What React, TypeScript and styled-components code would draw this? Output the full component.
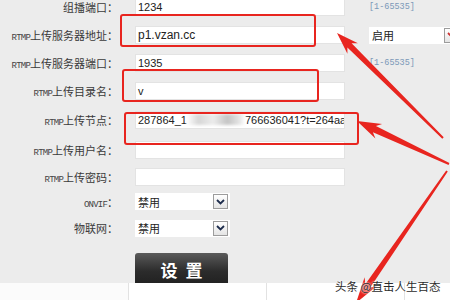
import React from "react";
import styled, { createGlobalStyle } from "styled-components";

const GlobalStyle = createGlobalStyle`
  html, body {
    margin: 0;
    padding: 0;
    width: 450px;
    height: 300px;
    overflow: hidden;
    background: #ececec;
  }
`;

const RED = "#e8251f";

type Pt = [number, number];

// builds a tapered arrow polygon from tip to tail
const arrowPoints = (tip: Pt, tail: Pt, headLen: number, headW: number, neckW: number, tailW: number) => {
  const dx = tail[0] - tip[0];
  const dy = tail[1] - tip[1];
  const len = Math.hypot(dx, dy);
  const ux = dx / len;
  const uy = dy / len;
  const nx = -uy;
  const ny = ux;
  const at = (d: number, w: number): string =>
    `${(tip[0] + ux * d + nx * w).toFixed(1)},${(tip[1] + uy * d + ny * w).toFixed(1)}`;
  return [
    at(0, 0),
    at(headLen, headW / 2),
    at(headLen * 0.8, neckW / 2),
    at(len, tailW / 2),
    at(len, -tailW / 2),
    at(headLen * 0.8, -neckW / 2),
    at(headLen, -headW / 2),
  ].join(" ");
};

const Page = styled.div`
  position: relative;
  width: 450px;
  height: 300px;
  overflow: hidden;
  display: flex;
  flex-direction: column;
  font-family: "Noto Sans CJK SC", "Liberation Sans", sans-serif;
`;

const Form = styled.div`
  margin-top: -7px;
  display: flex;
  flex-direction: column;
`;

const Row = styled.div<{ h: number }>`
  display: grid;
  grid-template-columns: 118px 210px 1fr;
  column-gap: 17px;
  align-items: center;
  height: ${(p) => p.h}px;
`;

const Label = styled.div`
  text-align: right;
  white-space: nowrap;
  font-size: 11px;
  color: #3a3a3a;
`;

const Latin = styled.span`
  font-family: "Liberation Mono", monospace;
  font-size: 9px;
  letter-spacing: -0.8px;
  color: #444;
`;

const Field = styled.div<{ big?: boolean }>`
  box-sizing: border-box;
  height: 18px;
  background: #fff;
  border: 1px solid #e3e3e3;
  padding-left: 2px;
  font-family: "Liberation Sans", Arial, sans-serif;
  font-size: ${(p) => (p.big ? 12 : 11)}px;
  line-height: 16px;
  color: #222;
  white-space: nowrap;
  overflow: hidden;
`;

const Blur = styled.span`
  display: inline-block;
  width: 58px;
  height: 11px;
  vertical-align: -1px;
  background: linear-gradient(90deg, #fff 0%, #d6d6d6 20%, #ececec 45%, #c4c4c4 70%, #e4e4e4 90%, #fff 100%);
  filter: blur(1.5px);
`;

const Hint = styled.div`
  margin-left: 7px;
  font-family: "Liberation Mono", monospace;
  font-size: 8.5px;
  color: #7b98b8;
`;

const Select = styled.div<{ w: number }>`
  box-sizing: border-box;
  width: ${(p) => p.w}px;
  height: 17px;
  background: #fff;
  display: flex;
  align-items: center;
  justify-content: space-between;
  padding: 0 2px 0 3px;
  font-size: 11px;
  color: #222;
`;

const SideSelect = styled(Select)`
  margin-left: 7px;
`;

const ArrowBox = styled.div`
  box-sizing: border-box;
  width: 15px;
  height: 15px;
  border: 1px solid #9c9c9c;
  background: linear-gradient(#ffffff, #e4e4e4);
  display: flex;
  align-items: center;
  justify-content: center;
`;

const ButtonRow = styled.div`
  padding: 11px 0 0 135px;
`;

const Button = styled.div`
  width: 93px;
  height: 30px;
  box-sizing: border-box;
  padding-top: 3px;
  border-radius: 3px 3px 0 0;
  background: linear-gradient(#5a5a5a, #2c2c2c 60%, #222);
  display: flex;
  align-items: center;
  justify-content: center;
  color: #fff;
  font-weight: bold;
  font-size: 17px;
  letter-spacing: 8px;
  text-indent: 8px;
`;

const Footer = styled.div`
  margin-top: auto;
  height: 17px;
  display: flex;
  background: #fff;
`;

const FooterCell = styled.div<{ w?: number }>`
  width: ${(p) => (p.w ? `${p.w}px` : "auto")};
  flex: ${(p) => (p.w ? "none" : 1)};
  border-left: 1px solid #e2e2e2;
  &:first-child {
    border-left: none;
    background: #fbfbfb;
  }
`;

const Mark = styled.div<{ l: number; t: number; w: number; h: number }>`
  position: absolute;
  left: ${(p) => p.l}px;
  top: ${(p) => p.t}px;
  width: ${(p) => p.w}px;
  height: ${(p) => p.h}px;
  box-sizing: border-box;
  border: 2px solid ${RED};
  border-radius: 3px;
`;

const Overlay = styled.svg`
  position: absolute;
  left: 0;
  top: 0;
  pointer-events: none;
`;

const Watermark = styled.div`
  position: absolute;
  left: 335px;
  top: 278px;
  font-size: 11.5px;
  color: #2b2b2b;
  white-space: nowrap;
  text-shadow: 0 0 2px #fff, 0 0 2px #fff;
`;

const Chevron = ({ color = "#1e2d4d" }: { color?: string }) => (
  <svg width="9" height="6" viewBox="0 0 9 6">
    <path d="M1 1 L4.5 4.5 L8 1" fill="none" stroke={color} strokeWidth="1.8" />
  </svg>
);

const rows = [
  { h: 28, label: <>组播端口：</>, value: "1234", hint: "[1-65535]" },
  { h: 28, label: <><Latin>RTMP</Latin>上传服务器地址：</>, value: "p1.vzan.cc", big: true, side: "启用" },
  { h: 28, label: <><Latin>RTMP</Latin>上传服务器端口：</>, value: "1935", hint: "[1-65535]" },
  { h: 27, label: <><Latin>RTMP</Latin>上传目录名：</>, value: "v" },
];

export default function App() {
  return (
    <Page>
      <GlobalStyle />
      <Form>
        {rows.map((r, i) => (
          <Row key={i} h={r.h}>
            <Label>{r.label}</Label>
            <Field big={r.big}>{r.value}</Field>
            {r.hint && <Hint>{r.hint}</Hint>}
            {r.side && (
              <SideSelect w={92}>
                <span>{r.side}</span>
                <ArrowBox>
                  <Chevron color="#c33" />
                </ArrowBox>
              </SideSelect>
            )}
          </Row>
        ))}
        <Row h={32}>
          <Label>
            <Latin>RTMP</Latin>上传节点：
          </Label>
          <Field>
            287864_1
            <Blur />
            766636041?t=264aa
          </Field>
        </Row>
        <Row h={28}>
          <Label>
            <Latin>RTMP</Latin>上传用户名：
          </Label>
          <Field />
        </Row>
        <Row h={25}>
          <Label>
            <Latin>RTMP</Latin>上传密码：
          </Label>
          <Field />
        </Row>
        <Row h={25}>
          <Label>
            <Latin>ONVIF</Latin>：
          </Label>
          <Select w={95}>
            <span>禁用</span>
            <ArrowBox>
              <Chevron />
            </ArrowBox>
          </Select>
        </Row>
        <Row h={28}>
          <Label>物联网：</Label>
          <Select w={95}>
            <span>禁用</span>
            <ArrowBox>
              <Chevron />
            </ArrowBox>
          </Select>
        </Row>
      </Form>
      <ButtonRow>
        <Button>设置</Button>
      </ButtonRow>
      <Footer>
        <FooterCell w={128} />
        <FooterCell w={137} />
        <FooterCell w={137} />
        <FooterCell />
      </Footer>

      <Mark l={120} t={14} w={196} h={33} />
      <Mark l={122} t={69} w={197} h={33} />
      <Mark l={124} t={112} w={235} h={33} />

      <Overlay width="450" height="300" viewBox="0 0 450 300">
        <polygon points={arrowPoints([337, 33], [443, 138], 22, 15, 6, 2)} fill={RED} />
        <polygon points={arrowPoints([357, 121], [449, 164], 24, 16, 7, 2)} fill={RED} />
        <polygon points={arrowPoints([356, 303], [447, 171], 26, 15, 6, 2)} fill={RED} />
      </Overlay>
      <Watermark>头条 @直击人生百态</Watermark>
    </Page>
  );
}
